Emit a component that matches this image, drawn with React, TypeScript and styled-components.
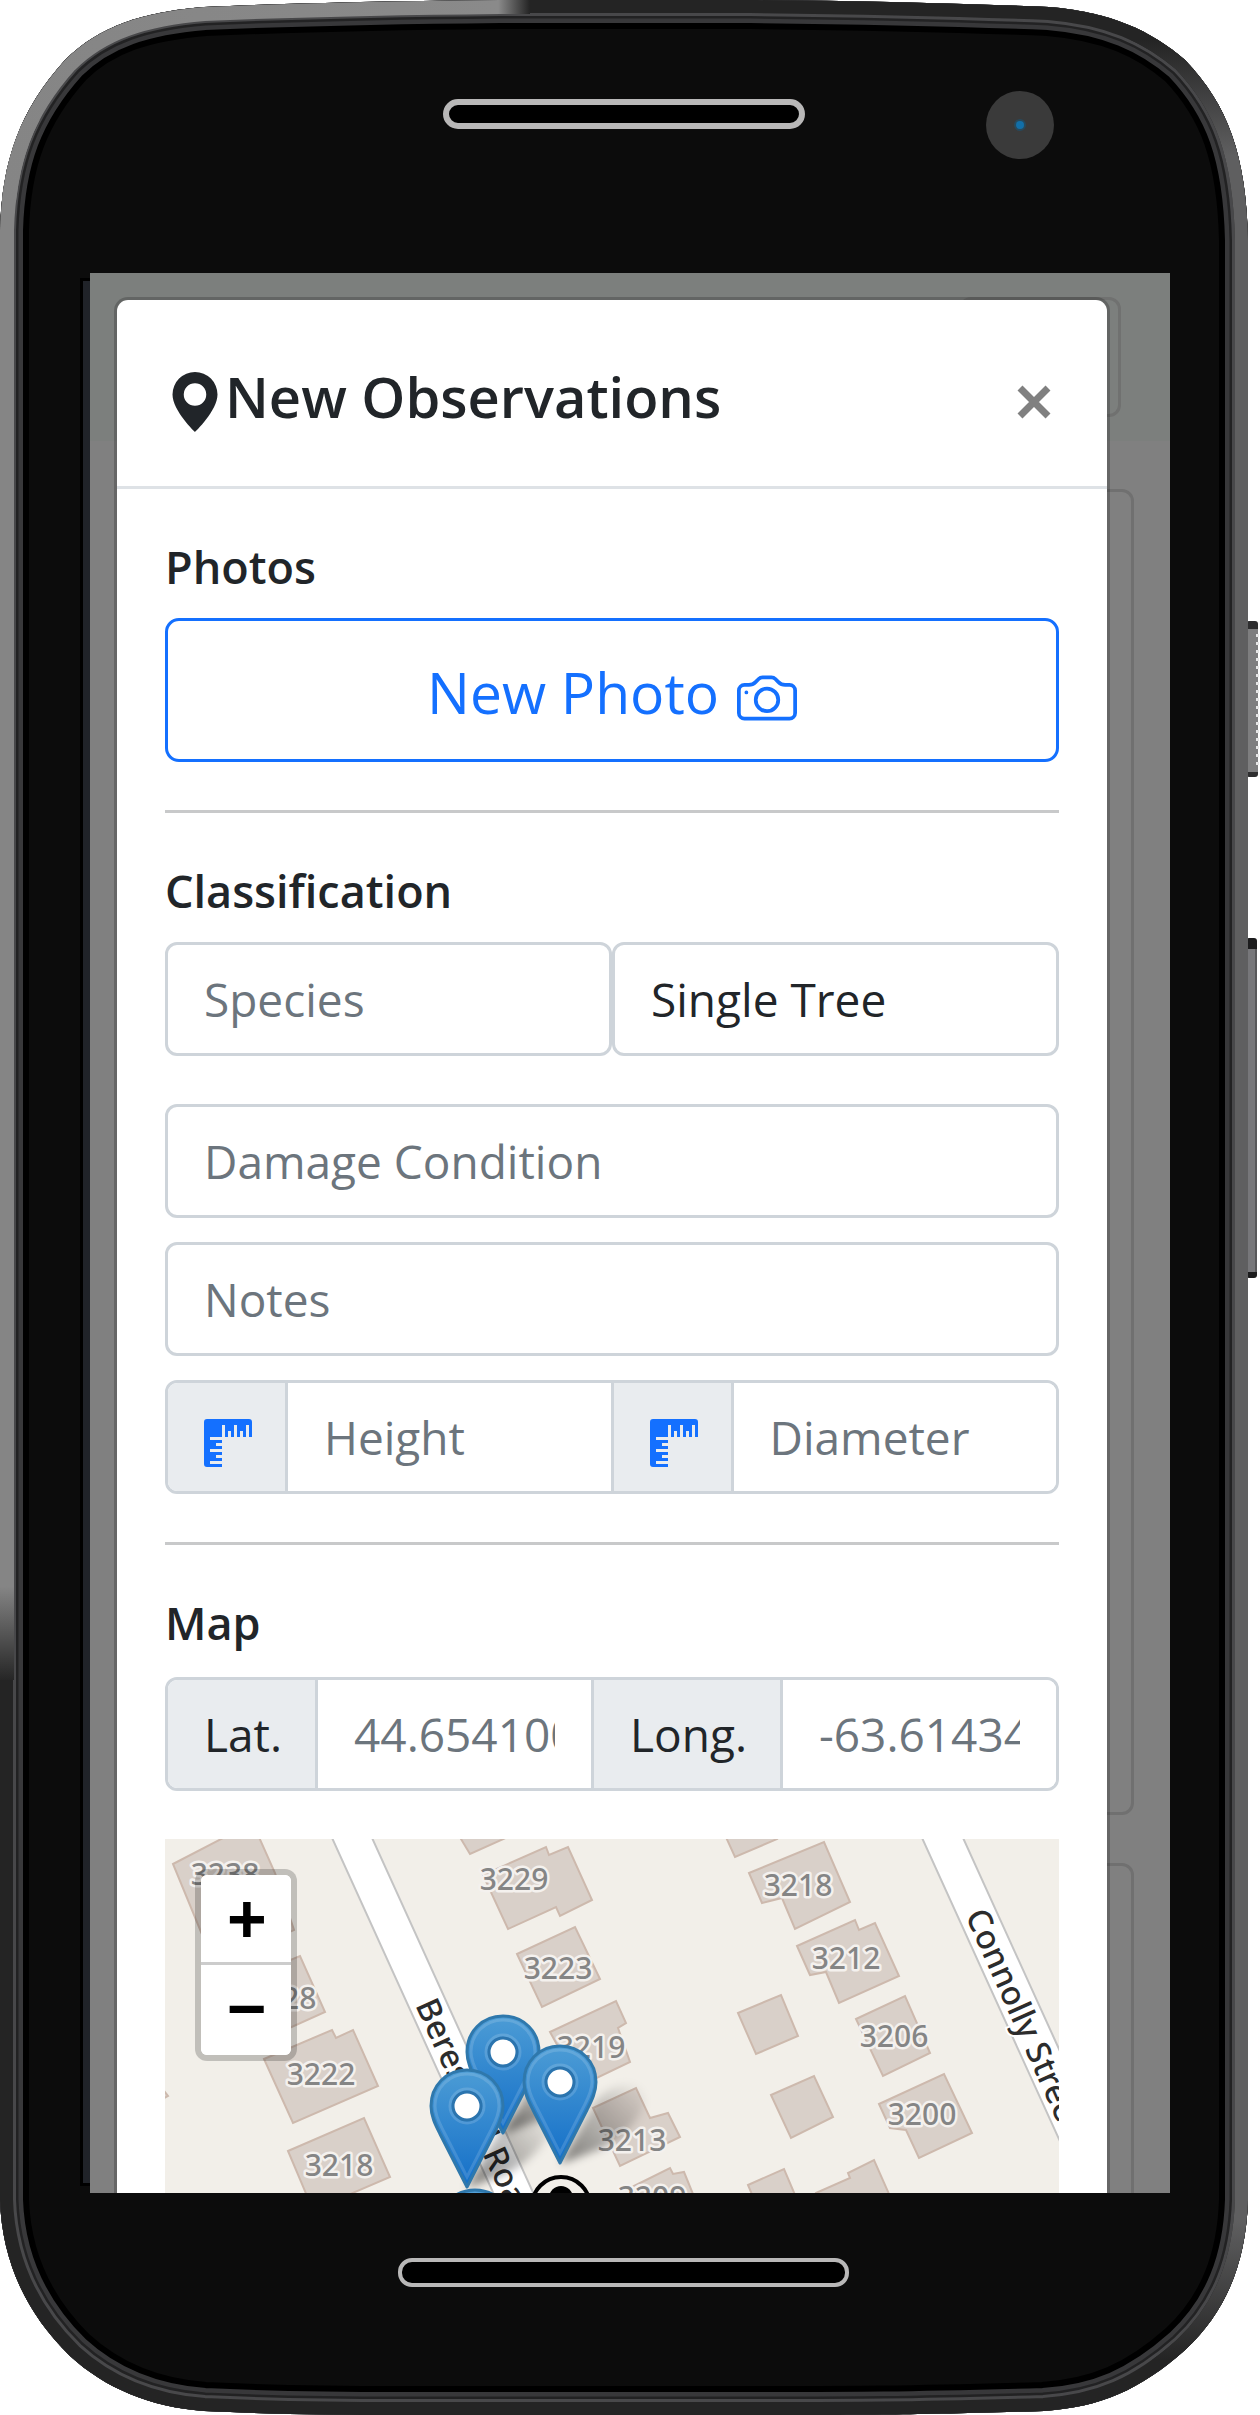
import React from "react";
import styled, { createGlobalStyle } from "styled-components";
import { BsCamera, BsGeoAltFill, BsRulers } from "react-icons/bs";

const GlobalStyle = createGlobalStyle`
  *, *::before, *::after { box-sizing: border-box; }
  body { margin: 0; background: #fff; }
`;

const ink = "#212529";
const muted = "#6c757d";
const line = "#ced4da";
const blue = "#1470ff";

const Phone = styled.main`
  position: relative;
  display: flex;
  flex-direction: column;
  height: 100vh;
  min-height: 1200px;
  padding: 273px 90px 222px;
  font-family: "Open Sans", "Noto Sans", sans-serif;
  font-size: 46px;
  line-height: 72px;
  color: ${ink};
`;

const ShellDrawing = styled.svg`
  position: absolute;
  inset: 0;
  width: 100%;
  height: 100%;
`;

const Screen = styled.div`
  position: relative;
  flex: 1;
  min-height: 0;
  overflow: hidden;
  background: #808080;
`;

const Backdrop = styled.div`
  position: absolute;
  inset: 0;
  display: flex;
  flex-direction: column;
  gap: 48px;
`;

const BackdropBar = styled.div`
  display: flex;
  justify-content: flex-end;
  height: 168px;
  padding: 24px 49px 24px 24px;
  background: #7c7f7d;
`;

const BackdropToggle = styled.div`
  width: 162px;
  height: 120px;
  border: 3px solid #707170;
  border-radius: 12px;
`;

const BackdropCard = styled.div<{ $height: number }>`
  flex: none;
  height: ${(p) => p.$height}px;
  margin: 0 36px;
  border: 3px solid #707070;
  border-radius: 12px;
`;

const DialogLayer = styled.div`
  position: relative;
  padding: 24px 60px 24px 24px;
`;

const Dialog = styled.section`
  overflow: hidden;
  border: 3px solid rgba(0, 0, 0, 0.2);
  border-radius: 14px;
  background: #fff;
  background-clip: padding-box;
`;

const DialogHeader = styled.header`
  display: flex;
  align-items: center;
  justify-content: space-between;
  padding: 51px 48px 45px;
  border-bottom: 3px solid #dee2e6;
`;

const DialogTitle = styled.h1`
  display: flex;
  align-items: center;
  margin: 0;
  font-size: 56px;
  font-weight: 600;
  line-height: 90px;

  svg {
    flex: none;
    margin-top: 12px;
  }
`;

const CloseButton = styled.button`
  display: grid;
  place-items: center;
  width: 51px;
  height: 48px;
  margin-top: 12px;
  padding: 0;
  border: 0;
  background: none;
  color: #808080;
`;

const DialogBody = styled.div`
  display: flex;
  flex-direction: column;
  padding: 48px;
`;

const SectionTitle = styled.h2<{ $gap?: number }>`
  margin: 0 0 ${(p) => p.$gap ?? 21}px;
  font-size: 45px;
  font-weight: 600;
  line-height: 60px;
`;

const Rule = styled.hr`
  width: 100%;
  height: 3px;
  margin: 48px 0;
  border: 0;
  background: #c8c9ca;
`;

const PhotoButton = styled.button`
  display: flex;
  align-items: center;
  justify-content: center;
  gap: 18px;
  padding: 26px 24px 22px;
  border: 3px solid ${blue};
  border-radius: 14px;
  background: #fff;
  color: ${blue};
  font-family: inherit;
  font-size: 57px;
  line-height: 90px;

  svg {
    margin-top: 12px;
  }
`;

const Stack = styled.div`
  display: flex;
  flex-direction: column;
  gap: 24px;
  margin-top: 48px;
`;

const FieldRow = styled.div`
  display: flex;
`;

const Field = styled.input`
  flex: 1;
  min-width: 0;
  height: 114px;
  padding: 0 36px;
  border: 3px solid ${line};
  border-radius: 12px;
  background: #fff;
  color: ${ink};
  font: inherit;

  &::placeholder {
    color: ${muted};
    opacity: 1;
  }
`;

const StackField = styled(Field)`
  flex: none;
  width: 100%;
`;

const SelectField = styled.select`
  flex: 1;
  min-width: 0;
  height: 114px;
  padding: 0 36px;
  border: 3px solid ${line};
  border-radius: 12px;
  background: #fff;
  color: ${ink};
  font: inherit;
  appearance: none;
`;

const AddonGroup = styled.div`
  display: flex;
  overflow: hidden;
  height: 114px;
  border: 3px solid ${line};
  border-radius: 12px;
`;

const AddonLabel = styled.label`
  display: flex;
  flex: none;
  align-items: center;
  padding: 0 33px 0 36px;
  border-right: 3px solid ${line};
  background: #e9ecef;

  input + & {
    border-left: 3px solid ${line};
  }

  svg {
    margin-top: 12px;
    color: ${blue};
  }
`;

const AddonField = styled(Field)`
  height: 100%;
  border: 0;
  border-radius: 0;
`;

const MapPanel = styled.div`
  position: relative;
  overflow: hidden;
  height: 600px;
  margin-top: 48px;
  background: #f2efe9;
`;

const MapDrawing = styled.svg`
  display: block;
  width: 100%;
  height: 100%;
`;

const ZoomControl = styled.div`
  position: absolute;
  top: 30px;
  left: 30px;
  display: flex;
  flex-direction: column;
  overflow: hidden;
  border: 6px solid rgba(0, 0, 0, 0.2);
  border-radius: 12px;
  background: #fff;
  background-clip: padding-box;
`;

const ZoomButton = styled.button`
  width: 90px;
  height: 90px;
  padding: 8px 0 0 2px;
  border: 0;
  background: #fff;
  color: #000;
  font-family: "Liberation Mono", monospace;
  font-size: 68px;
  font-weight: 700;
  line-height: 80px;

  & + & {
    border-top: 3px solid #ccc;
    height: 93px;
    margin-top: -3px;
  }
`;

const outline =
  "M0 230C2 160 20 110 65 60C100 25 145 12 204 7C300 3 400 1 500 0H750C850 1 950 3 1049 7C1110 12 1150 30 1185 60C1228 105 1246 155 1248 240V2200C1246 2260 1228 2310 1185 2350C1140 2390 1100 2407 1044 2411C900 2415 860 2415 750 2415H400C330 2415 270 2414 204 2411C150 2407 105 2388 70 2356C25 2312 2 2260 0 2200Z";

const ridges = Array.from({ length: 17 }, (_, i) => 634 + i * 8);

function Shell() {
  return (
    <ShellDrawing viewBox="0 0 1260 2415" preserveAspectRatio="none" aria-hidden="true">
      <defs>
        <clipPath id="shell-clip">
          <path d={outline} />
        </clipPath>
        <linearGradient id="top-light" gradientUnits="userSpaceOnUse" x1="0" x2="530" y1="0" y2="0">
          <stop offset="0" stopColor="#858585" />
          <stop offset="0.94" stopColor="#8a8a8a" />
          <stop offset="1" stopColor="#242424" />
        </linearGradient>
        <linearGradient id="left-light" gradientUnits="userSpaceOnUse" x1="0" x2="0" y1="120" y2="1680">
          <stop offset="0" stopColor="#858585" />
          <stop offset="0.94" stopColor="#858585" />
          <stop offset="1" stopColor="#262626" />
        </linearGradient>
        <linearGradient id="right-light" gradientUnits="userSpaceOnUse" x1="0" x2="0" y1="40" y2="2360">
          <stop offset="0" stopColor="#242424" />
          <stop offset="0.05" stopColor="#5f5f60" />
          <stop offset="0.94" stopColor="#5f5f60" />
          <stop offset="1" stopColor="#242424" />
        </linearGradient>
        <clipPath id="top-part">
          <path d="M0 0H530V60L130 200H0Z" />
        </clipPath>
        <clipPath id="left-part">
          <path d="M0 120H60V1680H0Z" />
        </clipPath>
        <clipPath id="right-part">
          <path d="M1120 40H1260V2360H1120Z" />
        </clipPath>
      </defs>

      <rect x="1246" y="621" width="12" height="156" rx="3" fill="#2e2e2f" />
      <rect x="1246" y="629" width="12" height="143" fill="#7e7e7f" />
      {ridges.map((y) => (
        <rect key={y} x="1256" y={y} width="3" height="3" fill="#e6e6e6" />
      ))}
      <rect x="1246" y="938" width="11" height="340" rx="3" fill="#1c1c1d" />
      <rect x="1246" y="949" width="11" height="323" fill="#77777a" />
      <rect x="1255" y="949" width="2" height="323" fill="#58585a" />

      <g clipPath="url(#shell-clip)" fill="none">
        <path d={outline} fill="#0c0c0c" />
        <path d={outline} stroke="#000" strokeWidth="58" />
        <path d={outline} stroke="#38383a" strokeWidth="46" />
        <path d={outline} stroke="#222223" strokeWidth="37" />
        <path d={outline} stroke="#48484a" strokeWidth="32" />
        <path d={outline} stroke="#242424" strokeWidth="26" />
        <g clipPath="url(#left-part)">
          <path d={outline} stroke="url(#left-light)" strokeWidth="28" />
        </g>
        <g clipPath="url(#top-part)">
          <path
            d="M0 260V230C2 160 20 110 65 60C100 25 145 12 204 7C300 3 400 1 500 0H530"
            stroke="url(#top-light)"
            strokeWidth="28"
          />
        </g>
        <g clipPath="url(#right-part)">
          <path d={outline} stroke="url(#right-light)" strokeWidth="26" />
        </g>
      </g>

      <rect x="446" y="102" width="356" height="24" rx="12" fill="#000" stroke="#b9b8b8" strokeWidth="6" />
      <rect x="400" y="2260" width="447" height="25" rx="12" fill="#000" stroke="#b9b8b8" strokeWidth="4" />
      <circle cx="1020" cy="125" r="34" fill="#3a3a3a" />
      <circle cx="1020" cy="125" r="6" fill="#27495c" />
      <circle cx="1020" cy="125" r="4" fill="#126fa8" />
      <rect x="80" y="278" width="10" height="1908" fill="#000" />
      <rect x="83" y="281" width="7" height="1902" fill="#202329" />
    </ShellDrawing>
  );
}

const buildings = [
  "8,25 60,-2 93,-4 110,34 129,91 50,127",
  "55,150 135,117 160,173 80,209",
  "99,220 167,191 171,199 188,191 213,247 128,284",
  "123,312 199,279 225,338 148,371",
  "-4,248 3,257 -4,261",
  "290,-10 305,15 345,-3 340,-20",
  "381,8 384,16 403,8 427,61 395,77 391,68 343,90 318,36",
  "352,115 410,88 435,140 377,168",
  "385,193 451,162 461,184 453,189 465,223 415,247",
  "428,269 471,249 485,279 503,274 515,298 455,327",
  "465,349 505,329 508,335 519,333 530,360 475,385",
  "555,-15 570,18 612,0 605,-15",
  "584,34 659,3 685,63 630,90 617,59 597,64",
  "632,107 690,81 694,91 710,84 734,137 674,164 661,133 645,136",
  "573,174 616,156 633,197 591,215",
  "691,180 740,157 765,214 718,237",
  "606,256 649,237 668,278 626,299",
  "714,265 779,235 807,294 754,319 741,291 725,289",
  "583,346 619,330 636,370 600,386",
  "651,354 685,339 683,334 709,321 735,380 665,400",
];

const houses: Array<[string, number, number]> = [
  ["3238", 60, 46],
  ["3229", 349, 51],
  ["3223", 393, 140],
  ["3228", 117, 170],
  ["3222", 156, 246],
  ["3218", 174, 337],
  ["3219", 426, 219],
  ["3213", 467, 312],
  ["3209", 487, 369],
  ["3218", 633, 57],
  ["3212", 681, 130],
  ["3206", 729, 208],
  ["3200", 757, 286],
];

const pins: Array<[number, number]> = [
  [338, 176],
  [395, 206],
  [302, 230],
  [310, 350],
];

const pinPath = "M0 1C-21 1 -36 17 -36 37C-36 48 -31 57 -27 65L0 118L27 65C31 57 36 48 36 37C36 17 21 1 0 1Z";

const HouseNumber = styled.text`
  font-family: "Noto Sans", sans-serif;
  font-size: 30px;
  font-weight: 500;
  fill: #858585;
  stroke: #f4f1ee;
  stroke-width: 5px;
  stroke-linejoin: round;
  paint-order: stroke;
  text-anchor: middle;
`;

const StreetName = styled.text`
  font-family: "Noto Sans", sans-serif;
  font-size: 33px;
  font-weight: 500;
  fill: #2c2c2c;
  stroke: #fff;
  stroke-width: 4px;
  paint-order: stroke;
`;

function StreetMap() {
  return (
    <MapDrawing viewBox="0 0 894 600" preserveAspectRatio="xMinYMin slice" role="img" aria-label="Street map">
      <defs>
        <linearGradient id="pin-fill" x1="0" x2="0" y1="0" y2="1">
          <stop offset="0" stopColor="#4c9cd5" />
          <stop offset="1" stopColor="#146fc8" />
        </linearGradient>
        <linearGradient id="pin-shade" x1="0" y1="1" x2="1" y2="0">
          <stop offset="0" stopColor="#000" stopOpacity="0.5" />
          <stop offset="1" stopColor="#000" stopOpacity="0" />
        </linearGradient>
        <filter id="soft" x="-30%" y="-30%" width="160%" height="160%">
          <feGaussianBlur stdDeviation="4" />
        </filter>
      </defs>
      <g fill="#d9d0c9" stroke="#cdb9ad" strokeWidth="2">
        {buildings.map((points) => (
          <polygon key={points} points={points} />
        ))}
      </g>
      <g fill="#fff" stroke="#c4c4c4" strokeWidth="2">
        <polygon points="163,-10 203,-10 480,600 440,600" />
        <polygon points="753,-10 794,-10 1074,606 1033,606" />
      </g>
      <StreetName transform="translate(250 166) rotate(65.6)">Beresford Road</StreetName>
      <StreetName transform="translate(800 76) rotate(66)">Connolly Street</StreetName>
      {houses.map(([label, x, y]) => (
        <HouseNumber key={`${label}-${x}`} x={x} y={y}>
          {label}
        </HouseNumber>
      ))}
      <g transform="translate(396 367)">
        <circle r="29" fill="#f2efe9" stroke="#000" strokeWidth="4" />
        <circle cy="-8" r="12" fill="#000" />
        <path d="M-20 20C-14 6 14 6 20 20C10 30 -10 30 -20 20Z" fill="#000" />
      </g>
      {pins.map(([x, y]) => (
        <path
          key={`shade-${x}`}
          transform={`translate(${x} ${y})`}
          d="M0 119L36 56C52 36 82 34 84 52C86 70 64 92 40 104Z"
          fill="url(#pin-shade)"
          filter="url(#soft)"
        />
      ))}
      {pins.map(([x, y]) => (
        <g key={`pin-${x}`} transform={`translate(${x} ${y})`}>
          <path d={pinPath} fill="url(#pin-fill)" stroke="#2f78ac" strokeWidth="3" strokeLinejoin="round" />
          <path
            d="M0 5C-18 5 -32 19 -32 37C-32 47 -27 55 -23 63L0 108L23 63C27 55 32 47 32 37C32 19 18 5 0 5Z"
            fill="none"
            stroke="#fff"
            strokeOpacity="0.14"
            strokeWidth="3"
          />
          <circle cy="37" r="17" fill="none" stroke="#fff" strokeOpacity="0.15" strokeWidth="3" />
          <circle cy="37" r="14" fill="#fff" stroke="#2b74ae" strokeWidth="3" />
        </g>
      ))}
    </MapDrawing>
  );
}

export default function App() {
  return (
    <>
      <GlobalStyle />
      <Phone>
        <Shell />
        <Screen>
          <Backdrop aria-hidden="true">
            <BackdropBar>
              <BackdropToggle />
            </BackdropBar>
            <BackdropCard $height={1326} />
            <BackdropCard $height={1200} />
          </Backdrop>
          <DialogLayer>
            <Dialog role="dialog" aria-labelledby="dialog-title">
              <DialogHeader>
                <DialogTitle id="dialog-title">
                  <BsGeoAltFill size={60} aria-hidden="true" />
                  New Observations
                </DialogTitle>
                <CloseButton type="button" aria-label="Close">
                  <svg width="34" height="34" viewBox="0 0 34 34" aria-hidden="true">
                    <path d="M3 3L31 31M31 3L3 31" stroke="currentColor" strokeWidth="7" />
                  </svg>
                </CloseButton>
              </DialogHeader>
              <DialogBody>
                <SectionTitle>Photos</SectionTitle>
                <PhotoButton type="button">
                  New Photo
                  <BsCamera size={60} aria-hidden="true" />
                </PhotoButton>
                <Rule />
                <SectionTitle>Classification</SectionTitle>
                <FieldRow>
                  <Field type="text" aria-label="Species" placeholder="Species" />
                  <SelectField aria-label="Tree grouping" defaultValue="single">
                    <option value="single">Single Tree</option>
                  </SelectField>
                </FieldRow>
                <Stack>
                  <StackField type="text" aria-label="Damage Condition" placeholder="Damage Condition" />
                  <StackField type="text" aria-label="Notes" placeholder="Notes" />
                  <AddonGroup>
                    <AddonLabel htmlFor="height" aria-label="Height">
                      <BsRulers size={48} aria-hidden="true" />
                    </AddonLabel>
                    <AddonField id="height" type="text" placeholder="Height" />
                    <AddonLabel htmlFor="diameter" aria-label="Diameter">
                      <BsRulers size={48} aria-hidden="true" />
                    </AddonLabel>
                    <AddonField id="diameter" type="text" placeholder="Diameter" />
                  </AddonGroup>
                </Stack>
                <Rule />
                <SectionTitle $gap={24}>Map</SectionTitle>
                <AddonGroup>
                  <AddonLabel htmlFor="latitude">Lat.</AddonLabel>
                  <AddonField id="latitude" type="text" placeholder="44.654100" />
                  <AddonLabel htmlFor="longitude">Long.</AddonLabel>
                  <AddonField id="longitude" type="text" placeholder="-63.614340" />
                </AddonGroup>
                <MapPanel>
                  <StreetMap />
                  <ZoomControl>
                    <ZoomButton type="button" aria-label="Zoom in">
                      +
                    </ZoomButton>
                    <ZoomButton type="button" aria-label="Zoom out">
                      −
                    </ZoomButton>
                  </ZoomControl>
                </MapPanel>
              </DialogBody>
            </Dialog>
          </DialogLayer>
        </Screen>
      </Phone>
    </>
  );
}
